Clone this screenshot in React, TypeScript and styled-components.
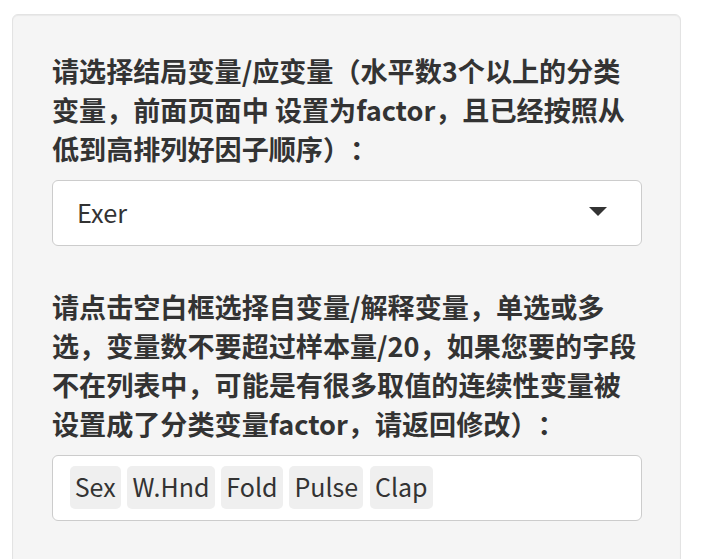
import React from "react";
import styled, { createGlobalStyle } from "styled-components";

const GlobalStyle = createGlobalStyle`
  html, body {
    margin: 0;
    padding: 0;
    background: #ffffff;
  }
  body {
    font-family: "Noto Sans CJK SC", "Noto Sans", sans-serif;
    color: #333333;
  }
  * { box-sizing: border-box; }
`;

const Page = styled.div`
  padding: 14px 0 0 12px;
  width: 708px;
  height: 559px;
  overflow: hidden;
`;

const Well = styled.div`
  width: 669px;
  background: #f5f5f5;
  border: 1px solid #e3e3e3;
  border-radius: 6px;
  box-shadow: inset 0 1px 1px rgba(0, 0, 0, 0.05);
  padding: 36px 38px 80px 39px;
`;

const FormGroup = styled.div<{ $gap: number }>`
  margin-bottom: ${(p) => p.$gap}px;
`;

const Label = styled.label`
  display: block;
  font-family: "Noto Sans CJK SC", sans-serif;
  font-weight: 700;
  font-size: 27.1px;
  line-height: 39px;
  color: #333333;
  margin-bottom: 12px;
  text-spacing-trim: space-all;
`;

const Line = styled.span`
  display: block;
  white-space: nowrap;
`;

const SelectBox = styled.div`
  height: 66px;
  display: flex;
  align-items: center;
  background: #ffffff;
  border: 1px solid #cccccc;
  border-radius: 6px;
  padding: 12px 34px 13px 24px;
`;

const SelectValue = styled.span`
  font-family: "Noto Sans CJK SC", sans-serif;
  font-size: 25.3px;
  line-height: 39px;
  color: #333333;
`;

const Caret = styled.span`
  margin-left: auto;
  margin-top: -2px;
  width: 0;
  height: 0;
  border-left: 9px solid transparent;
  border-right: 9px solid transparent;
  border-top: 9px solid #333333;
`;

const MultiBox = styled.div`
  display: flex;
  flex-wrap: wrap;
  gap: 6.5px;
  background: #ffffff;
  border: 1px solid #cccccc;
  border-radius: 6px;
  padding: 10px 17px 11px 16.5px;
`;

const Tag = styled.span`
  display: inline-block;
  height: 43px;
  padding: 1px 5.2px 3px 5.2px;
  background: #efefef;
  border-radius: 5px;
  font-family: "Noto Sans CJK SC", sans-serif;
  font-size: 25px;
  line-height: 39px;
  color: #333333;
`;

const outcomeLines = [
  "请选择结局变量/应变量（水平数3个以上的分类",
  "变量，前面页面中 设置为factor，且已经按照从",
  "低到高排列好因子顺序）：",
];

const predictorLines = [
  "请点击空白框选择自变量/解释变量，单选或多",
  "选，变量数不要超过样本量/20，如果您要的字段",
  "不在列表中，可能是有很多取值的连续性变量被",
  "设置成了分类变量factor，请返回修改）：",
];

const tags = ["Sex", "W.Hnd", "Fold", "Pulse", "Clap"];

export default function App() {
  return (
    <>
      <GlobalStyle />
      <Page>
        <Well>
          <FormGroup $gap={41}>
            <Label>
              {outcomeLines.map((l) => (
                <Line key={l}>{l}</Line>
              ))}
            </Label>
            <SelectBox>
              <SelectValue>Exer</SelectValue>
              <Caret />
            </SelectBox>
          </FormGroup>
          <FormGroup $gap={29}>
            <Label>
              {predictorLines.map((l) => (
                <Line key={l}>{l}</Line>
              ))}
            </Label>
            <MultiBox>
              {tags.map((t) => (
                <Tag key={t}>{t}</Tag>
              ))}
            </MultiBox>
          </FormGroup>
        </Well>
      </Page>
    </>
  );
}
